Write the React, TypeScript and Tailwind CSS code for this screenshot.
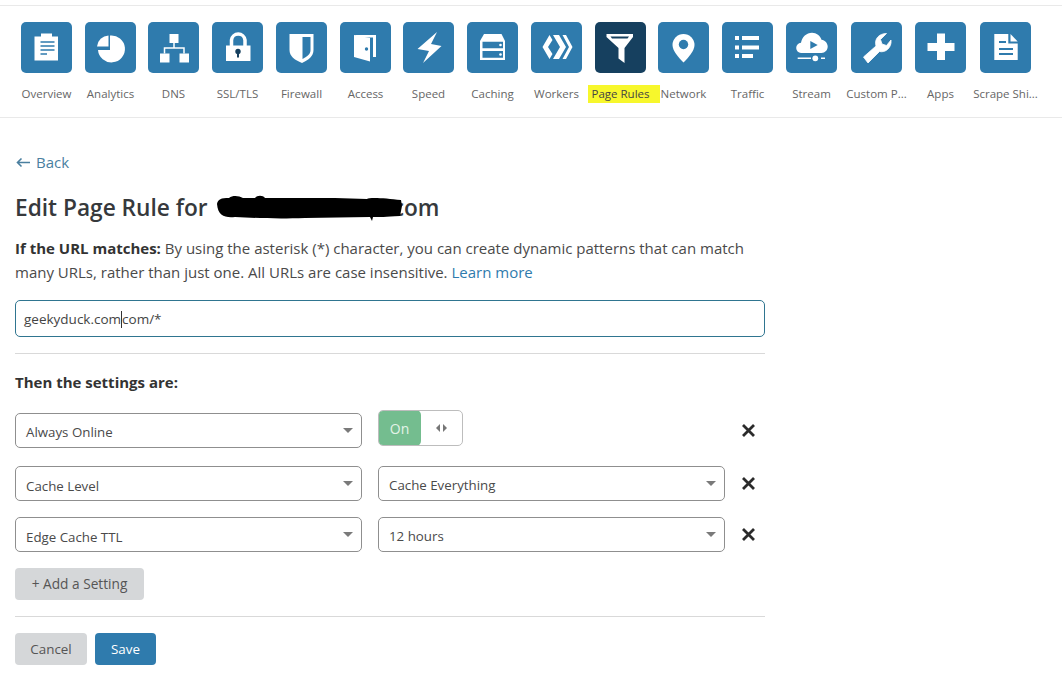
import React from "react";

const W = "#ffffff";
const B = "#2f7bad";
const D = "#16405f";

const icons: Record<string, React.ReactNode> = {
  overview: (
    <>
      <path d="M13.500 14.500h6.500v-3h11v3h6v24h-23.500z" fill={W} />
      <path d="M19.500 20h14M19.500 24h14M19.500 28h14M19.500 32h6.500" stroke={B} strokeWidth="1.600" />
    </>
  ),
  analytics: (
    <>
      <path d="M25 13.500a13.500 13.500 0 1 1-12 14.500h12z" fill={W} />
      <path d="M12 24.500a12 12 0 0 1 11.500-11v11z" fill={W} />
    </>
  ),
  dns: (
    <>
      <path d="M21.500 12h9v9h-9zM12 31.500h9.500v9H12zM31.500 31.500h9.500v9h-9.500z" fill={W} />
      <path d="M26 21v5M16.500 31.500v-5.500h19.500v5.500" stroke={W} strokeWidth="1.500" fill="none" />
    </>
  ),
  lock: (
    <>
      <path d="M14 23.500h24.500V39H14z" fill={W} />
      <path d="M19.500 24v-6a6.800 6.800 0 0 1 13.500 0v6" stroke={W} strokeWidth="3.500" fill="none" />
      <circle cx="26" cy="29.500" r="2.700" fill={D} />
      <path d="M25 30h2v5.500h-2z" fill={D} />
    </>
  ),
  firewall: (
    <>
      <path d="M13.500 12h24v16c0 6-5 10-11.500 13C18.500 38 13.500 34 13.500 28z" fill={W} />
      <path d="M26.500 15h8v13c0 4-3 6.500-8 9z" fill={B} />
    </>
  ),
  access: (
    <>
      <path d="M14 13h22v22h-3V15.500H20z" fill={W} />
      <path d="M14 13l16 3v23.500L14 35z" fill={W} />
      <circle cx="26.500" cy="27" r="1.700" fill={B} />
    </>
  ),
  speed: <path d="M34 10L28 22l10.500 2L20 41l6-12-11.500-2z" fill={W} />,
  caching: (
    <>
      <path d="M17 12h17.500l3.500 7v19H13V19z" fill={W} />
      <path d="M15.500 19.800h20.500v6.500H15.500zM15.500 29h20.500v6.700H15.500z" fill={B} />
      <circle cx="33.500" cy="23" r="1.300" fill={W} />
      <circle cx="33.500" cy="32.500" r="1.300" fill={W} />
    </>
  ),
  workers: (
    <>
      <path d="M18.500 13l3 5L17 25l4.500 7-3 5-7-12z" fill={W} />
      <path d="M22 13h6l7 12-7 12h-6l7-12z" fill={W} />
      <path d="M31.500 13h3.500l6.500 12L35 37h-3.500l6.500-12z" fill={W} />
    </>
  ),
  rules: (
    <>
      <path d="M11.500 12h26.500v3L29.500 26v15l-6-4.500V26L11.500 15z" fill={W} />
      <path d="M15.500 14.500h18.500l-1.500 2H17z" fill={D} />
    </>
  ),
  network: (
    <>
      <path d="M25.500 12a11 11 0 0 1 11 11c0 6-6.500 13-11 17.500C21 36 14.500 29 14.500 23a11 11 0 0 1 11-11z" fill={W} />
      <circle cx="25.500" cy="22.500" r="4.700" fill={B} />
    </>
  ),
  traffic: (
    <>
      <path d="M13 14h4v4h-4zM13 23.500h4v4h-4zM13 32h4v4h-4z" fill={W} />
      <path d="M20 14h17v4H20zM20 23.500h17v4H20zM20 32h11v4H20z" fill={W} />
    </>
  ),
  stream: (
    <>
      <path d="M15 31a5 5 0 0 1-4.800-5c0-2.800 2-4.800 4.800-5.200C16 15 20.500 10.800 26 10.800c4.500 0 8.300 3 9.500 7 3.500.5 6.200 3.500 6.200 6.800 0 3.700-2.700 6.400-6.200 6.400z" fill={W} />
      <path d="M24.300 19l7.400 4-7.400 4z" fill={B} />
      <path d="M11.700 36.300H25M35 36.300h4" stroke={W} strokeWidth="1.400" />
      <circle cx="29.300" cy="36.300" r="2.900" fill={W} />
    </>
  ),
  custom: <path d="M12.500 35L25 24c-2-7 3-12.500 10.500-12.500l-6 6 1.500 4.500 4.500 1.500L40 18c1 8-6 13-11.500 11.500L17 41z" fill={W} stroke={W} strokeWidth=".8" strokeLinejoin="round" />,
  apps: <path d="M22 11.500h8V21h9.500v8H30v9h-8v-9h-9.500v-8H22z" fill={W} />,
  scrape: (
    <>
      <path d="M14.300 12h14v9.500h9.400V38H14.300z" fill={W} />
      <path d="M30.500 12l7.200 7.500h-7.200z" fill={W} />
      <path d="M19 20h7M19 27h14M19 32h14" stroke={B} strokeWidth="1.800" />
    </>
  ),
};

const nav = [
  { label: "Overview", icon: "overview", gap: "mr-[13px]" },
  { label: "Analytics", icon: "analytics", gap: "mr-[12px]" },
  { label: "DNS", icon: "dns", gap: "mr-[13px]" },
  { label: "SSL/TLS", icon: "lock", gap: "mr-[13px]" },
  { label: "Firewall", icon: "firewall", gap: "mr-[13px]" },
  { label: "Access", icon: "access", gap: "mr-[12px]" },
  { label: "Speed", icon: "speed", gap: "mr-[13px]" },
  { label: "Caching", icon: "caching", gap: "mr-[13px]" },
  { label: "Workers", icon: "workers", gap: "mr-[13px]" },
  { label: "Page Rules", icon: "rules", gap: "mr-[12px]", active: true },
  { label: "Network", icon: "network", gap: "mr-[13px]" },
  { label: "Traffic", icon: "traffic", gap: "mr-[13px]" },
  { label: "Stream", icon: "stream", gap: "mr-[14px]" },
  { label: "Custom P...", icon: "custom", gap: "mr-[13px]" },
  { label: "Apps", icon: "apps", gap: "mr-[14px]" },
  { label: "Scrape Shi...", icon: "scrape", gap: "" },
];

function Select({ value, cls, dy = "" }: { value: string; cls: string; dy?: string }) {
  return (
    <div className={`h-[35px] flex items-center justify-between border border-[#8f8f8f] rounded-[5px] bg-white pl-[10px] pr-[8px] ${cls}`}>
      <span className={`text-[13.300px] text-[#4a4a4a] ${dy}`}>{value}</span>
      <span className="w-0 h-0 border-l-[5px] border-r-[5px] border-t-[5px] border-l-transparent border-r-transparent border-t-[#7a7a7a]" />
    </div>
  );
}

function Close() {
  return (
    <svg width="15" height="15" viewBox="0 0 15 15" className="ml-[16px]">
      <path d="M2 2l11 11M13 2L2 13" stroke="#2b2b2b" strokeWidth="2.800" />
    </svg>
  );
}

export default function App() {
  return (
    <div className="w-[1062px] h-[683px] overflow-hidden bg-white text-[#444] font-['Open_Sans',sans-serif]">
      <div className="h-[5px]" />
      <nav className="h-[113px] border-y border-[#e9e9e9] flex pl-[21px] pt-[16px]">
        {nav.map((n) => (
          <div key={n.label} className={`w-[51px] ${n.gap} shrink-0 flex flex-col items-center`}>
            <div className={`w-[51px] h-[51px] shrink-0 rounded-[5px] ${n.active ? "bg-[#16405f]" : "bg-[#2f7bad]"}`}>
              <svg width="51" height="51" viewBox="0 0 51 51">{icons[n.icon]}</svg>
            </div>
            <span
              className={`mt-[12px] text-[11.500px] leading-[18px] whitespace-nowrap ${
                n.active ? "bg-[#f7f72c] ml-[6px] pl-[4px] pr-[10px] text-[#444]" : "text-[#666]"
              }`}
            >
              {n.label}
            </span>
          </div>
        ))}
      </nav>

      <main className="w-[765px] pl-[15px] pt-[33px]">
        <a className="flex items-center h-[22px] text-[15px] text-[#4a7f9f]">
          <svg width="15" height="11" viewBox="0 0 15 11" className="ml-[1px] mr-[5px]">
            <path d="M14 5.500H1.500M5.500 1.500l-4 4 4 4" stroke="#4a7f9f" strokeWidth="1.600" fill="none" />
          </svg>
          Back
        </a>

        <h1 className="relative mt-[18px] h-[33px] leading-[32px] text-[22.700px] font-semibold text-[#36393c] flex items-center whitespace-nowrap">
          Edit Page Rule for
          <span className="w-[185px] shrink-0" />
          com
          <svg width="190" height="34" viewBox="0 0 190 34" className="absolute left-[200px] top-[-1px]">
            <path d="M2 14C3 9 6 8 14 8C18 5 24 6 28 8L40 8C42 5 48 5 50 8L120 8L152 9C154 7 170 8 186 10L187 16L185 26C170 27 165 27 158 27L157 31L155 27L90 28C60 29 40 28 20 27C10 28 3 26 2 14z" fill="#000" />
          </svg>
        </h1>

        <p className="mt-[12px] text-[15px] leading-[24px] text-[#4a4a4a] w-[750px]">
          <b className="font-bold text-[#333]">If the URL matches:</b> By using the asterisk (*) character, you can create dynamic patterns that can match{" "}
          many URLs, rather than just one. All URLs are case insensitive. <a className="text-[#2f7bad]">Learn more</a>
        </p>

        <div className="mt-[16px] h-[37px] w-[750px] border border-[#2f7590] rounded-[5px] flex items-center pl-[8px] pt-[1px] text-[13.500px] text-[#444]">
          geekyduck.com<span className="w-px h-[17px] bg-[#333]" />com/*
        </div>

        <div className="mt-[16px] border-t border-[#d9d9d9] w-[750px]" />

        <h2 className="mt-[17px] h-[22px] leading-[22px] text-[15px] font-bold text-[#333]">Then the settings are:</h2>

        <div className="mt-[20px] flex items-start h-[35px]">
          <Select value="Always Online" cls="w-[347px]" dy="mt-[4px]" />
          <div className="ml-[16px] -mt-[3px] w-[85px] h-[36px] border border-[#bdbdbd] rounded-[5px] flex overflow-hidden">
            <div className="w-[43px] bg-[#74bd8f] -m-px mr-0 flex items-center justify-center rounded-r-[5px] text-[14px] text-[#e3f3e8]">On</div>
            <div className="flex-1 flex items-center justify-center gap-[2px]">
              <span className="w-0 h-0 border-y-[4px] border-r-[4px] border-y-transparent border-r-[#777]" />
              <span className="w-0 h-0 border-y-[4px] border-l-[4px] ml-[1px] border-y-transparent border-l-[#777]" />
            </div>
          </div>
          <div className="ml-[262px] self-center">
            <Close />
          </div>
        </div>

        <div className="mt-[18px] flex items-center">
          <Select value="Cache Level" cls="w-[347px]" dy="mt-[7px]" />
          <Select value="Cache Everything" cls="w-[347px] ml-[16px]" dy="mt-[5px]" />
          <Close />
        </div>

        <div className="mt-[16px] flex items-center">
          <Select value="Edge Cache TTL" cls="w-[347px]" dy="mt-[7px]" />
          <Select value="12 hours" cls="w-[347px] ml-[16px]" dy="mt-[5px]" />
          <Close />
        </div>

        <button className="mt-[16px] block w-[129px] h-[32px] rounded-[4px] bg-[#d5d7d9] text-[13.700px] text-[#555]">+ Add a Setting</button>

        <div className="mt-[16px] border-t border-[#d9d9d9] w-[750px]" />

        <div className="mt-[16px] flex gap-[8px]">
          <button className="w-[72px] h-[32px] rounded-[4px] bg-[#d5d7d9] text-[13.400px] text-[#555]">Cancel</button>
          <button className="w-[61px] h-[32px] rounded-[4px] bg-[#2f7bad] text-[13.400px] text-white">Save</button>
        </div>
      </main>
    </div>
  );
}
